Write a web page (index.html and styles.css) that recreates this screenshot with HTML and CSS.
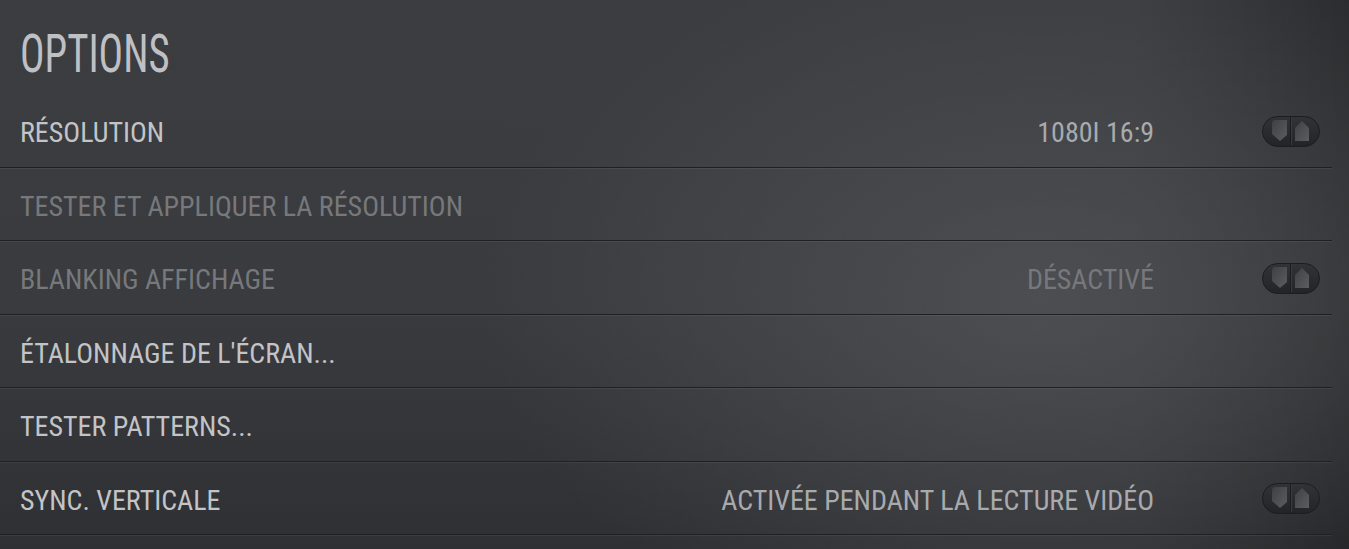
FILE: index.html
```html
<!DOCTYPE html>
<html lang="fr">
<head>
    <meta charset="UTF-8">
    <meta name="viewport" content="width=device-width, initial-scale=1.0">
    <title>Options</title>
    <link rel="stylesheet" href="styles.css">
</head>
<body>
    <h1 class="title">OPTIONS</h1>

    <div class="list">
        <div class="row">
            <span class="label">RÉSOLUTION</span>
            <span class="value">1080I 16:9</span>
            <span class="spin">
                <svg width="58" height="31" viewBox="0 0 58 31">
                    <defs>
                        <linearGradient id="g1" x1="0" y1="0" x2="0" y2="1">
                            <stop offset="0" stop-color="#323337"/>
                            <stop offset="1" stop-color="#232427"/>
                        </linearGradient>
                        <linearGradient id="g2" x1="0" y1="0" x2="1" y2="1">
                            <stop offset="0" stop-color="#3f4044"/>
                            <stop offset="1" stop-color="#5c5d61"/>
                        </linearGradient>
                    </defs>
                    <rect x="0.5" y="0.5" width="57" height="30" rx="15" fill="url(#g1)" stroke="#1c1d1f"/>
                    <line x1="28.5" y1="1" x2="28.5" y2="30" stroke="#1b1c1e"/>
                    <line x1="29.5" y1="2" x2="29.5" y2="29" stroke="#3a3b3f"/>
                    <path d="M13 4 H25 V19 L18 25 L10 18 V8 Q10 4 13 4 Z" fill="url(#g2)"/>
                    <path d="M33 12 L40 5 L47 12 V25 H33 Z" fill="url(#g2)"/>
                </svg>
            </span>
        </div>
        <div class="row dim">
            <span class="label">TESTER ET APPLIQUER LA RÉSOLUTION</span>
        </div>
        <div class="row dim">
            <span class="label">BLANKING AFFICHAGE</span>
            <span class="value">DÉSACTIVÉ</span>
            <span class="spin">
                <svg width="58" height="31" viewBox="0 0 58 31">
                    <rect x="0.5" y="0.5" width="57" height="30" rx="15" fill="url(#g1)" stroke="#1c1d1f"/>
                    <line x1="28.5" y1="1" x2="28.5" y2="30" stroke="#1b1c1e"/>
                    <line x1="29.5" y1="2" x2="29.5" y2="29" stroke="#3a3b3f"/>
                    <path d="M13 4 H25 V19 L18 25 L10 18 V8 Q10 4 13 4 Z" fill="url(#g2)"/>
                    <path d="M33 12 L40 5 L47 12 V25 H33 Z" fill="url(#g2)"/>
                </svg>
            </span>
        </div>
        <div class="row">
            <span class="label">ÉTALONNAGE DE L'ÉCRAN...</span>
        </div>
        <div class="row">
            <span class="label">TESTER PATTERNS...</span>
        </div>
        <div class="row">
            <span class="label">SYNC. VERTICALE</span>
            <span class="value">ACTIVÉE PENDANT LA LECTURE VIDÉO</span>
            <span class="spin">
                <svg width="58" height="31" viewBox="0 0 58 31">
                    <rect x="0.5" y="0.5" width="57" height="30" rx="15" fill="url(#g1)" stroke="#1c1d1f"/>
                    <line x1="28.5" y1="1" x2="28.5" y2="30" stroke="#1b1c1e"/>
                    <line x1="29.5" y1="2" x2="29.5" y2="29" stroke="#3a3b3f"/>
                    <path d="M13 4 H25 V19 L18 25 L10 18 V8 Q10 4 13 4 Z" fill="url(#g2)"/>
                    <path d="M33 12 L40 5 L47 12 V25 H33 Z" fill="url(#g2)"/>
                </svg>
            </span>
        </div>
    </div>
</body>
</html>
```

FILE: styles.css
```css
html, body { height: 100%; }
body {
    margin: 0;
    overflow: hidden;
    font-family: "Roboto Condensed", "DejaVu Sans Condensed", "Liberation Sans Narrow", Roboto, sans-serif;
    color: #c3c4c7;
    background-color: #393b3e;
    background-image:
        radial-gradient(ellipse 560px 360px at 1040px 300px, rgba(78, 80, 83, 0.9), rgba(78, 80, 83, 0) 100%),
        linear-gradient(to right, rgba(0, 0, 0, 0) 84%, rgba(0, 0, 0, 0.28) 100%),
        linear-gradient(to bottom, #3b3d40 0%, #393b3e 55%, #2e3033 100%);
}
/* title face is narrower than the list text */
.title { margin: 0; padding: 28px 0 0 26px; height: 94px; box-sizing: border-box; font-size: 53px; font-weight: normal; line-height: 1; color: #bfc0c4; transform: scaleX(0.77); transform-origin: left top; }
.list { width: 1332px; }
.row { height: 73.5px; box-sizing: border-box; display: flex; align-items: center; padding: 5px 12px 0 20px; border-bottom: 1px solid #1f2022; box-shadow: 0 1px 0 rgba(255, 255, 255, 0.06); font-size: 28px; }
.row .spin { margin-top: -3px; }
.label { flex: 1; }
.value { color: #a9aaad; margin-right: 108px; }
.dim .label, .dim .value { color: #77787b; }
.spin { display: flex; }
```
